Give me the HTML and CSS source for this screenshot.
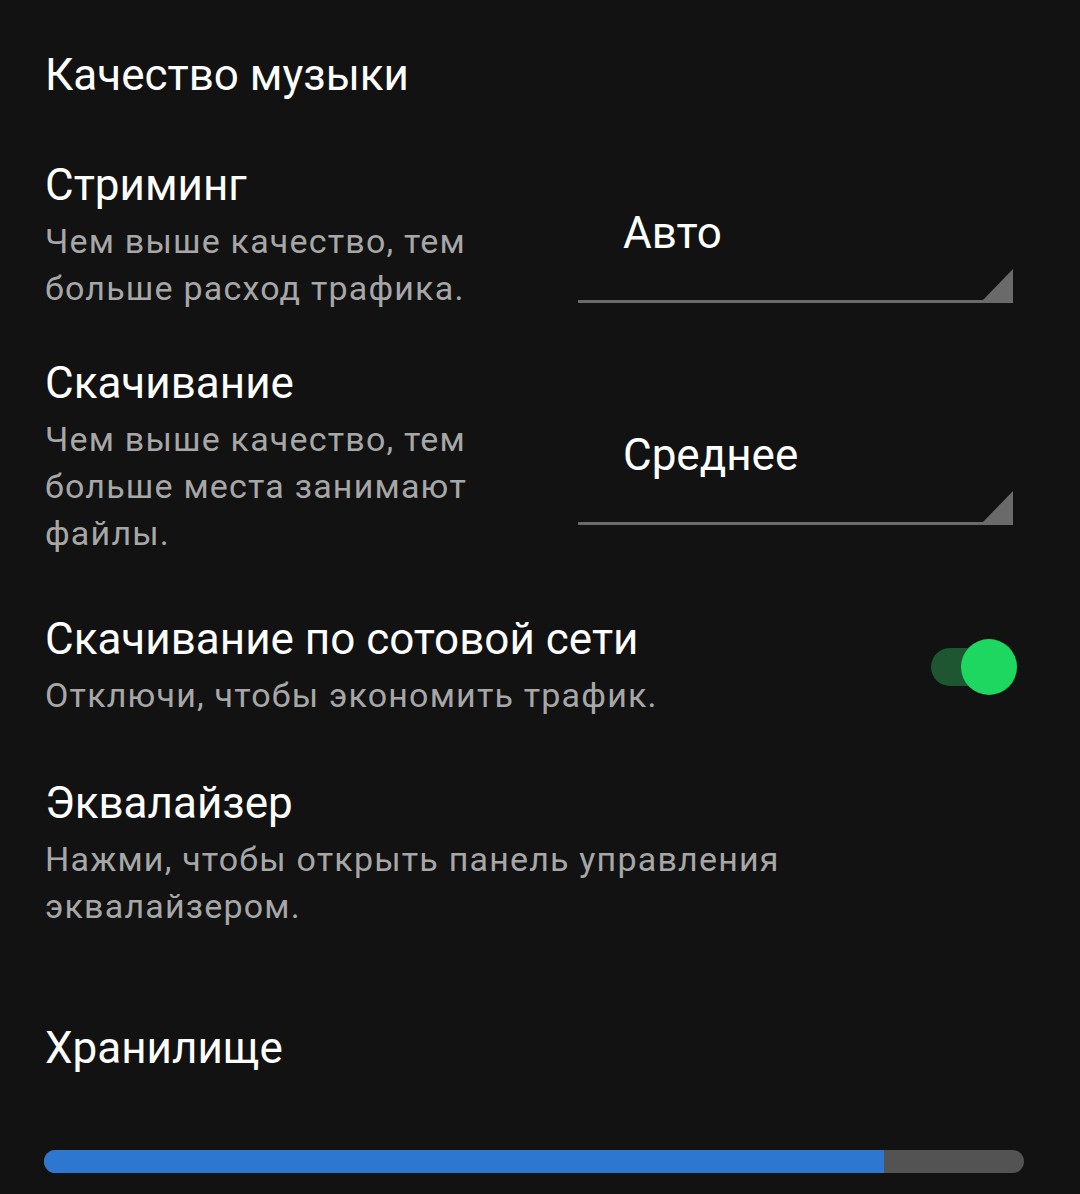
FILE: index.html
```html
<!DOCTYPE html>
<html lang="ru">
<head>
  <meta charset="UTF-8">
  <title>Настройки — Качество музыки</title>
  <link rel="stylesheet" href="styles.css">
</head>
<body>
  <div class="settings">
    <h2 class="section-title">Качество музыки</h2>

    <div class="row row-streaming">
      <div class="text">
        <div class="title">Стриминг</div>
        <div class="subtitle">Чем выше качество, тем<br>больше расход трафика.</div>
      </div>
      <div class="dropdown">
        <span class="value">Авто</span>
        <span class="corner"></span>
      </div>
    </div>

    <div class="row row-download">
      <div class="text">
        <div class="title">Скачивание</div>
        <div class="subtitle">Чем выше качество, тем<br>больше места занимают<br>файлы.</div>
      </div>
      <div class="dropdown">
        <span class="value">Среднее</span>
        <span class="corner"></span>
      </div>
    </div>

    <div class="row row-cellular">
      <div class="text">
        <div class="title">Скачивание по сотовой сети</div>
        <div class="subtitle">Отключи, чтобы экономить трафик.</div>
      </div>
      <div class="switch on">
        <span class="track"></span>
        <span class="thumb"></span>
      </div>
    </div>

    <div class="row row-eq">
      <div class="text">
        <div class="title">Эквалайзер</div>
        <div class="subtitle">Нажми, чтобы открыть панель управления<br>эквалайзером.</div>
      </div>
    </div>

    <h2 class="section-title storage-title">Хранилище</h2>

    <div class="storage-bar">
      <div class="used" style="width: 85.7%"></div>
    </div>
  </div>
</body>
</html>
```

FILE: styles.css
```css
html, body {
  margin: 0;
  padding: 0;
  background: #121212;
}

body {
  font-family: Roboto, "Noto Sans", sans-serif;
  color: #fff;
  height: 1194px;
  overflow: hidden;
}

.settings {
  padding: 50px 56px 0 44px;
}

.section-title {
  margin: 0;
  font-size: 44px;
  font-weight: 400;
  line-height: 50px;
  padding-left: 1px;
}

.row {
  display: flex;
  align-items: center;
  padding-left: 1px;
}

.row-streaming {
  margin-top: 60px;
}

.row-download {
  margin-top: 46px;
}

.row-cellular {
  margin-top: 57px;
}

.row-eq {
  margin-top: 59px;
}

.text {
  flex: 1;
  white-space: nowrap;
}

.title {
  font-size: 44px;
  line-height: 50px;
  margin-bottom: 8px;
}

.subtitle {
  font-size: 34px;
  line-height: 47px;
  letter-spacing: 1.2px;
  color: #a7a7a7;
}

.dropdown {
  position: relative;
  flex: none;
  width: 435px;
  height: 134px;
  margin-right: 11px;
  border-bottom: 3px solid #6a6a6a;
  box-sizing: border-box;
}

.dropdown .value {
  display: block;
  padding: 42px 0 0 45px;
  font-size: 44px;
  line-height: 44px;
}

.dropdown .corner {
  position: absolute;
  right: 0;
  bottom: 0;
  width: 0;
  height: 0;
  border-left: 30px solid transparent;
  border-bottom: 31px solid #6a6a6a;
}

.switch {
  position: relative;
  flex: none;
  width: 86px;
  height: 56px;
  margin-right: 7px;
}

.switch .track {
  position: absolute;
  left: 0;
  top: 9px;
  width: 70px;
  height: 38px;
  border-radius: 19px;
  background: #1d5631;
}

.switch .thumb {
  position: absolute;
  right: 0;
  top: 0;
  width: 56px;
  height: 56px;
  border-radius: 50%;
  background: #1ed760;
}

.storage-title {
  margin-top: 93px;
}

.storage-bar {
  margin-top: 77px;
  width: 980px;
  height: 23px;
  border-radius: 12px;
  background: #535353;
  overflow: hidden;
}

.storage-bar .used {
  height: 100%;
  background: #2e77d0;
}
```
